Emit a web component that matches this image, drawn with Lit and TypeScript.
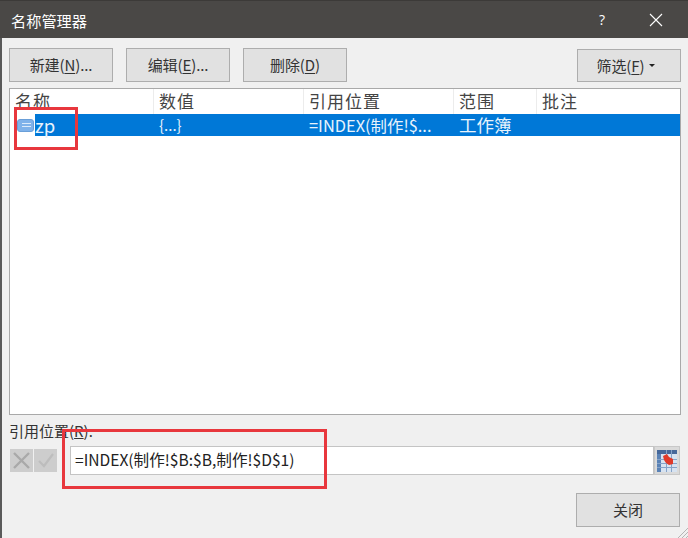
import { LitElement, html, css } from "lit";
import { customElement } from "lit/decorators.js";

@customElement("app-root")
export class AppRoot extends LitElement {
  static styles = css`
    :host { display: block; width: 688px; height: 538px; overflow: hidden; position: relative; background: #f0f0f0; font-family: "Noto Sans CJK SC", "Open Sans", sans-serif; color: #333; }
    * { box-sizing: border-box; }
    .title { height: 38px; background: #4a4846; color: #fff; display: flex; align-items: center; padding-left: 11px; font-size: 15.2px; border-top: 1px solid #3c3a38; }
    .title .t { flex: 1; }
    .help { width: 14px; font-size: 14px; margin-right: 36px; font-family: "Open Sans", sans-serif; }
    .close { width: 14px; height: 14px; margin-right: 25px; display: block; }
    .main { height: 500px; border-left: 2px solid #5a5a5a; padding: 10px 7px 0 7px; display: flex; flex-direction: column; position: relative; }
    .toolbar { display: flex; height: 34px; }
    .btn { width: 104px; height: 34px; background: #e1e1e1; border: 1px solid #adadad; display: flex; align-items: center; justify-content: center; font-size: 15px; color: #333; letter-spacing: -0.1px; padding-bottom: 1px; }
    .btn u { text-decoration-thickness: 1px; text-underline-offset: 2px; }
    .toolbar .btn { margin-right: 13px; }
    .toolbar .btn.filter { margin: 1px 0 0 auto; height: 33px; width: 104px; padding-right: 6px; }
    .caret { width: 0; height: 0; border-left: 3px solid transparent; border-right: 3px solid transparent; border-top: 3px solid #222; margin-left: 5px; }
    .list { margin-top: 6px; width: 672px; height: 327px; background: #fff; border: 1px solid #a9a9a9; display: flex; flex-direction: column; }
    .head { display: grid; grid-template-columns: 144px 150px 150px 83px 1fr; height: 25px; flex: none; }
    .head div { font-size: 17px; padding-left: 5px; border-right: 1px solid #ececec; line-height: 24px; letter-spacing: 1px; color: #444; }
    .head div:last-child { border-right: 0; }
    .row { display: flex; height: 22px; align-items: center; }
    .ico { width: 17px; height: 13px; margin-left: 7px; margin-right: 1px; background: #7fb2ea; border-radius: 3px; border: 1px solid #6a9fd8; display: flex; flex-direction: column; justify-content: center; align-items: flex-end; gap: 2px; padding-right: 2px; flex: none; }
    .ico i { display: block; width: 9px; height: 1px; background: #dcebfb; }
    .sel { flex: 1; height: 22px; background: #0078d7; color: #e8f3fc; display: grid; grid-template-columns: 119px 150px 150px 83px 1fr; font-size: 17.5px; line-height: 22px; }
    .sel div { white-space: nowrap; }
    .sel .c0 { padding-left: 0; font-size: 18.5px; }
    .sel .c1 { padding-left: 5px; font-size: 15px; }
    .sel .c2 { padding-left: 5px; font-size: 16.4px; }
    .sel .c3 { padding-left: 5px; }
    .lbl { margin-top: 6px; font-size: 15px; line-height: 20px; height: 20px; color: #333; }
    .refrow { display: flex; margin-top: 5px; height: 29px; }
    .refbtns { display: flex; gap: 1px; width: 61px; padding: 3px 0 0 1px; }
    .mini { width: 23px; height: 23px; background: #cdcdcd; display: flex; align-items: center; justify-content: center; }
    .mini svg { width: 21px; height: 21px; display: block; }
    .input { width: 584px; height: 29px; background: #fff; border: 1px solid #c4c4c4; font-size: 15.6px; line-height: 25px; padding-left: 4px; color: #222; white-space: nowrap; }
    .picker { width: 26px; height: 29px; background: #dadada; border: 1px solid #c8c8c8; display: flex; align-items: center; justify-content: center; }
    .foot { display: flex; justify-content: flex-end; margin-top: 18px; padding-right: 1px; }
    .mark { position: absolute; border: 3px solid #e8373d; pointer-events: none; }
    .m1 { left: 14px; top: 107px; width: 64px; height: 43px; }
    .m2 { left: 62px; top: 429px; width: 265px; height: 60px; }
    .grip { position: absolute; right: 0; bottom: 0; width: 12px; height: 12px; display: block; }
  `;

  render() {
    return html`
      <div class="title">
        <span class="t">名称管理器</span>
        <span class="help">?</span>
        <svg class="close" viewBox="0 0 14 14"><path d="M1 1 L13 13 M13 1 L1 13" stroke="#fff" stroke-width="1.1" fill="none"/></svg>
      </div>
      <div class="main">
        <div class="toolbar">
          <div class="btn">新建(<u>N</u>)...</div>
          <div class="btn">编辑(<u>E</u>)...</div>
          <div class="btn">删除(<u>D</u>)</div>
          <div class="btn filter">筛选(<u>F</u>)<span class="caret"></span></div>
        </div>
        <div class="list">
          <div class="head">
            <div>名称</div><div>数值</div><div>引用位置</div><div>范围</div><div>批注</div>
          </div>
          <div class="row">
            <span class="ico"><i></i><i></i></span>
            <div class="sel">
              <div class="c0">zp</div><div class="c1">{...}</div><div class="c2">=INDEX(制作!$...</div><div class="c3">工作簿</div><div></div>
            </div>
          </div>
        </div>
        <div class="lbl">引用位置(<u>R</u>):</div>
        <div class="refrow">
          <div class="refbtns">
            <div class="mini"><svg viewBox="0 0 21 21"><path d="M3 3 L18 18 M18 3 L3 18" stroke="#a9a9a9" stroke-width="2.4" fill="none"/></svg></div>
            <div class="mini"><svg viewBox="0 0 21 21"><path d="M4 11 L9 16 L18 4" stroke="#bdbdbd" stroke-width="2.2" fill="none"/></svg></div>
          </div>
          <div class="input">=INDEX(制作!$B:$B,制作!$D$1)</div>
          <div class="picker">
            <svg width="20" height="22" viewBox="0 0 20 22">
              <rect width="20" height="22" fill="#d7e3f1"/>
              <rect width="20" height="4" fill="#46689a"/>
              <rect y="4" width="4" height="18" fill="#5a82b6"/>
              <path d="M0 9.5H20M0 13.5H20M0 17.5H20M9.5 0V22M14.5 0V22" stroke="#86a3c8" stroke-width="1"/>
              <path d="M6 6 L10 4 L12 7 L16 9 L16 14 L12 15 L9 13 L7 10 Z" fill="#e03a2a"/>
            </svg>
          </div>
        </div>
        <div class="foot"><div class="btn">关闭</div></div>
      </div>
      <div class="mark m1"></div>
      <div class="mark m2"></div>
      <svg class="grip" viewBox="0 0 12 12"><path d="M12 2 L2 12 M12 6 L6 12 M12 10 L10 12" stroke="#b5b5b5" stroke-width="1"/></svg>
    `;
  }
}
